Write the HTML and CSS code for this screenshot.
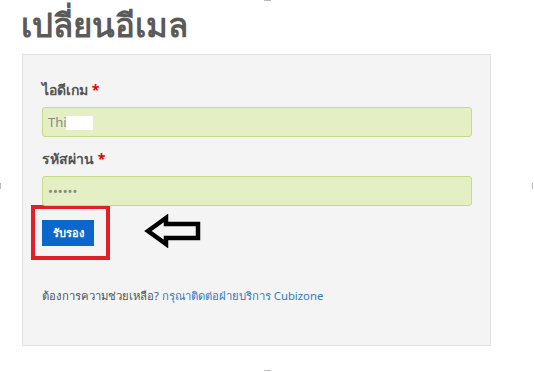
FILE: index.html
```html
<!DOCTYPE html>
<html lang="th">
<head>
    <meta charset="UTF-8">
    <title>เปลี่ยนอีเมล</title>
    <link rel="stylesheet" href="styles.css">
</head>
<body>
    <h1>เปลี่ยนอีเมล</h1>
    <div class="panel">
        <label class="label" for="gameId">ไอดีเกม <span class="req">*</span></label>
        <div class="field">
            <input id="gameId" class="input" type="text" value="Thi">
            <span class="blur"></span>
        </div>
        <label class="label" for="pass">รหัสผ่าน <span class="req">*</span></label>
        <div class="field">
            <input id="pass" class="input" type="password" value="123456">
        </div>
        <div class="actions">
            <div class="highlight">
                <button class="submit">รับรอง</button>
            </div>
            <svg class="arrow" width="58" height="34" viewBox="0 0 58 34">
                <path d="M4 17 L22 4 L22 10 L54 10 L54 24 L22 24 L22 30 Z" fill="none" stroke="#000" stroke-width="4.5" stroke-linejoin="miter"/>
            </svg>
        </div>
        <p class="help">ต้องการความช่วยเหลือ? <a href="#">กรุณาติดต่อฝ่ายบริการ Cubizone</a></p>
    </div>
    <span class="handle handle-top"></span>
    <span class="handle handle-bottom"></span>
    <span class="handle handle-left"></span>
    <span class="handle handle-right"></span>
</body>
</html>
```

FILE: styles.css
```css
body {
    font-family: 'Noto Sans', 'DejaVu Sans', sans-serif;
    margin: 0;
    padding: 0 0 0 22px;
    background-color: #fff;
    color: #555;
    width: 469px;
}
h1 {
    font-size: 33px;
    font-weight: bold;
    color: #5a5a5a;
    margin: 0 0 0 -1px;
    height: 54px;
    line-height: 50px;
}
.panel {
    background-color: #f4f4f4;
    border: 1px solid #e0e0e0;
    padding: 22px 18px 0 19px;
    height: 268px;
}
.label {
    display: block;
    font-size: 14px;
    font-weight: bold;
    color: #555;
    height: 30px;
    line-height: 26px;
}
.req {
    color: #e00;
}
.field {
    position: relative;
    margin-bottom: 9px;
}
.input {
    box-sizing: border-box;
    width: 430px;
    height: 30px;
    background-color: #e5efc4;
    border: 1px solid #c7da8c;
    border-radius: 3px;
    padding: 0 5px;
    font-family: 'Noto Sans', sans-serif;
    font-size: 13px;
    color: #888;
    display: block;
}
.blur {
    position: absolute;
    left: 24px;
    top: 9px;
    width: 27px;
    height: 14px;
    background-color: #fff;
}
.actions {
    display: flex;
    align-items: center;
    margin-left: -11px;
    margin-top: -10px;
}
.highlight {
    border: 4px solid #e41e26;
    padding: 11px 12px 10px 7px;
    width: 52px;
    height: 26px;
}
.submit {
    width: 52px;
    height: 26px;
    background-color: #0b67cc;
    border: none;
    color: #fff;
    font-family: 'Noto Sans', sans-serif;
    font-size: 11px;
    font-weight: bold;
    padding: 0;
    cursor: pointer;
}
.arrow {
    margin-left: 34px;
    margin-top: -4px;
}
.help {
    font-size: 11.3px;
    margin: 27px 0 0 0;
    color: #555;
}
.help a {
    color: #2f7bc4;
    text-decoration: none;
}
.handle {
    position: absolute;
    background-color: #bbb;
}
.handle-top {
    left: 264px;
    top: 0;
    width: 7px;
    height: 1px;
}
.handle-bottom {
    left: 264px;
    top: 370px;
    width: 7px;
    height: 1px;
}
.handle-left {
    left: 0;
    top: 183px;
    width: 1px;
    height: 6px;
}
.handle-right {
    left: 532px;
    top: 183px;
    width: 1px;
    height: 6px;
}
```
